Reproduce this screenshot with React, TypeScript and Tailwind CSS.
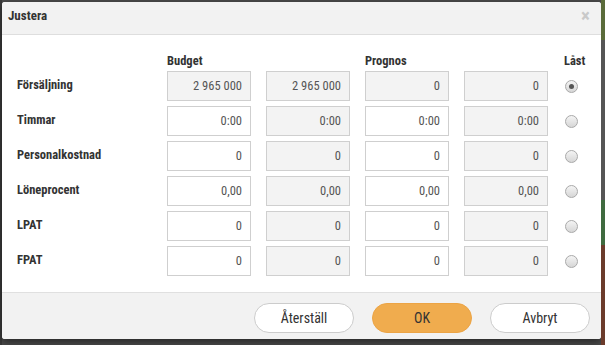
const font = '[font-family:"Roboto_Condensed","Liberation_Sans_Narrow","Arial_Narrow",Roboto,sans-serif]';

const rows = [
  { label: 'Försäljning', values: ['2 965 000', '2 965 000', '0', '0'], editable: [false, false, false, false], locked: true },
  { label: 'Timmar', values: ['0:00', '0:00', '0:00', '0:00'], editable: [true, false, true, false], locked: false },
  { label: 'Personalkostnad', values: ['0', '0', '0', '0'], editable: [true, false, true, false], locked: false },
  { label: 'Löneprocent', values: ['0,00', '0,00', '0,00', '0,00'], editable: [true, false, true, false], locked: false },
  { label: 'LPAT', values: ['0', '0', '0', '0'], editable: [true, false, true, false], locked: false },
  { label: 'FPAT', values: ['0', '0', '0', '0'], editable: [true, false, true, false], locked: false },
];

function Radio({ checked }: { checked: boolean }) {
  return (
    <div className="w-[13px] h-[13px] rounded-full border border-[#a9a9a9] bg-gradient-to-b from-[#f4f4f4] to-[#d6d6d6] flex items-center justify-center">
      {checked && <div className="w-[5px] h-[5px] rounded-full bg-[#555]" />}
    </div>
  );
}

export default function App() {
  return (
    <div className={`w-[605px] h-[345px] bg-[#4b4b4b] flex ${font}`}>
      <div className="w-[2px] bg-[#3a3a3a]" />
      <div className="flex flex-col pt-[2px]">
        <div className="w-[599px] h-[337px] bg-white rounded-[3px] shadow-[0_3px_8px_rgba(0,0,0,0.5)] flex flex-col overflow-hidden">
          <div className="h-[33px] bg-[#f2f2f2] border-b border-[#dedede] flex items-start justify-between pt-[4px] pl-[6px] pr-[11px] shrink-0">
            <span className="text-[13px] font-bold text-[#333]">Justera</span>
            <span className="text-[19px] font-bold text-[#c9c9c9] leading-none">×</span>
          </div>

          <div className="flex-1 flex flex-col pl-[15px] pt-[18px]">
            <div className="flex items-center h-[16px] mb-[2px] text-[12.5px] font-bold text-[#333]">
              <div className="w-[150px]" />
              <div className="w-[84px]">Budget</div>
              <div className="w-[15px]" />
              <div className="w-[84px]" />
              <div className="w-[15px]" />
              <div className="w-[84px]">Prognos</div>
              <div className="w-[15px]" />
              <div className="w-[84px]" />
              <div className="w-[16px]" />
              <div>Låst</div>
            </div>

            <div className="flex flex-col gap-[5px]">
              {rows.map((row) => (
                <div key={row.label} className="flex items-start h-[30px]">
                  <div className="w-[150px] pt-[5px] text-[12.5px] font-bold text-[#333]">{row.label}</div>
                  <div className="flex gap-[15px]">
                    {row.values.map((v, i) => (
                      <div
                        key={i}
                        className={`w-[84px] h-[30px] border border-[#cfcfcf] flex items-center justify-end pr-[8px] text-[12.5px] text-[#555] ${
                          row.editable[i] ? 'bg-white' : 'bg-[#f3f3f3]'
                        }`}
                      >
                        {v}
                      </div>
                    ))}
                  </div>
                  <div className="pl-[17px] h-[30px] flex items-center">
                    <Radio checked={row.locked} />
                  </div>
                </div>
              ))}
            </div>
          </div>

          <div className="h-[47px] shrink-0 bg-[#f2f2f2] border-t border-[#e0e0e0] flex justify-end items-start pt-[10px] pr-[11px] gap-[18px]">
            <button className="w-[100px] h-[30px] rounded-full bg-white border border-[#cccccc] text-[14px] text-[#333]">Återställ</button>
            <button className="w-[100px] h-[30px] rounded-full bg-[#f0ac4e] border border-[#eca445] text-[14px] text-[#333]">OK</button>
            <button className="w-[100px] h-[30px] rounded-full bg-white border border-[#cccccc] text-[14px] text-[#333]">Avbryt</button>
          </div>
        </div>
      </div>
      <div className="flex-1 flex flex-col">
        <div className="h-[40px] bg-[#5a6b3a]" />
        <div className="h-[160px] bg-[#555]" />
        <div className="h-[45px] bg-[#3f6b3f]" />
        <div className="flex-1 bg-[#6b3b2b]" />
      </div>
    </div>
  );
}
